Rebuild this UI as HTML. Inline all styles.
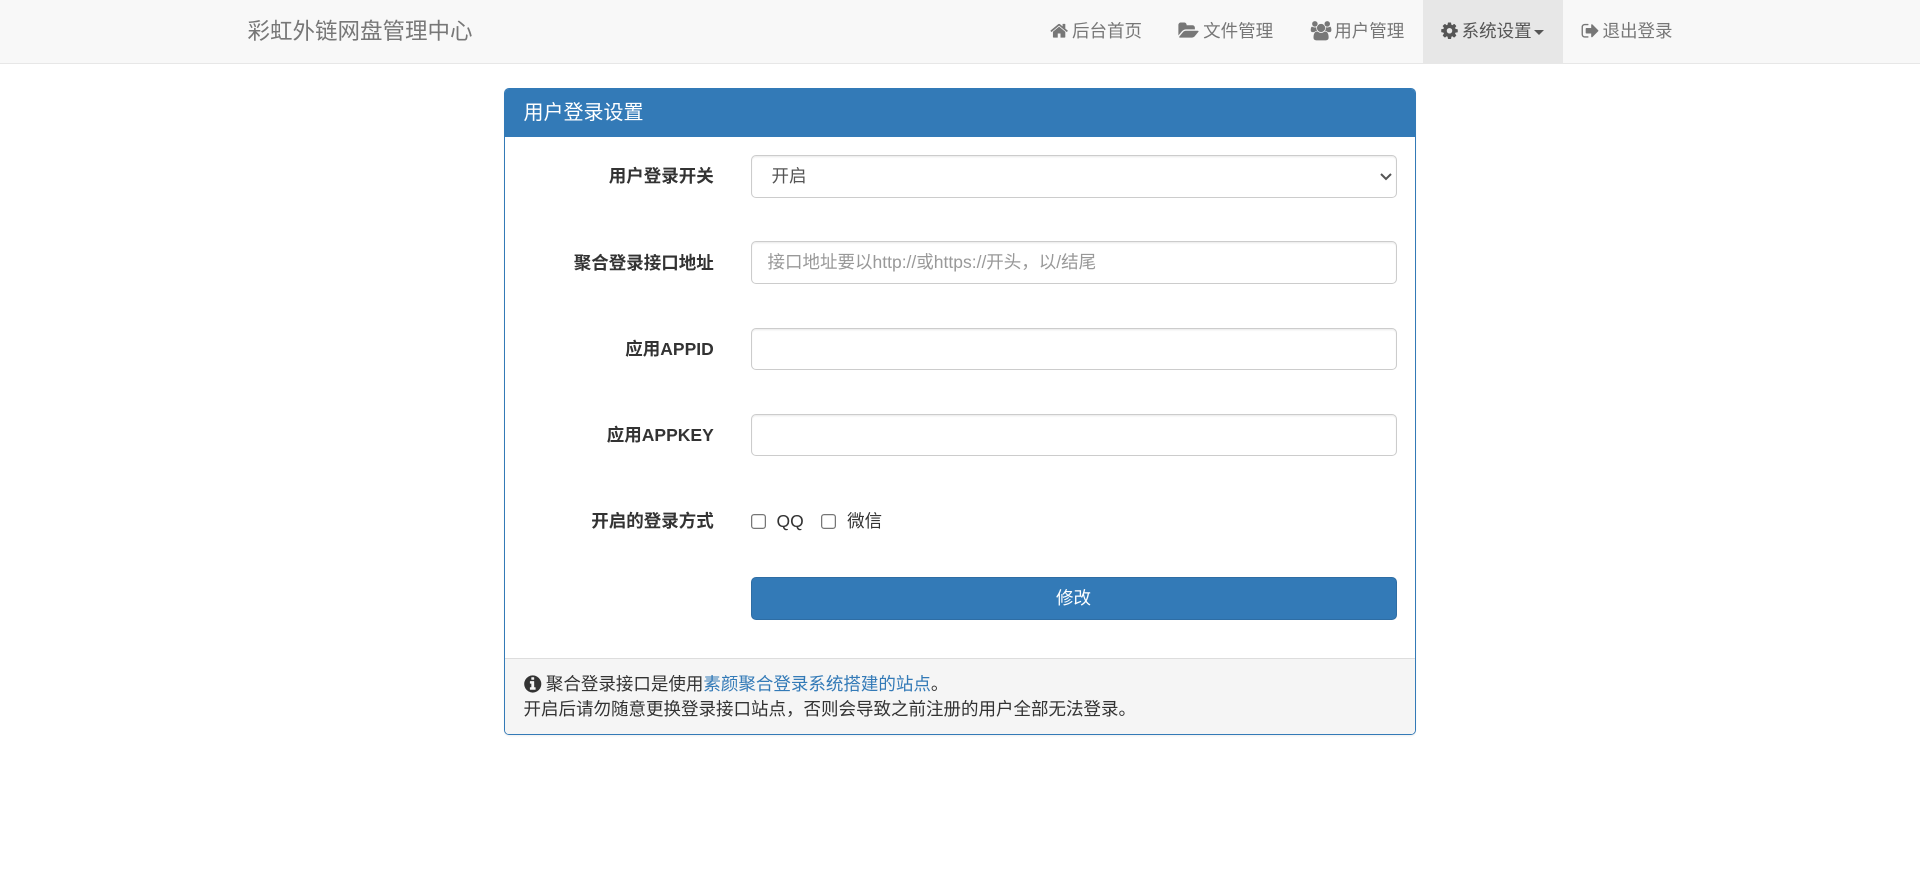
<!DOCTYPE html>
<html lang="zh-CN">
<head>
<meta charset="utf-8">
<title>用户登录设置</title>
<style>
*{box-sizing:border-box}
html{margin:0;padding:0;background:#fff}
body{margin:0;width:1536px;height:702.4px;overflow:hidden;zoom:1.25;background:#fff;color:#333;font:14px/1.42857143 "Liberation Sans","Noto Sans CJK SC",sans-serif}
a{text-decoration:none}
.navbar{height:51px;background:#f8f8f8;border-bottom:1px solid #e7e7e7;position:relative}
.brand{position:absolute;left:183px;top:0;height:50px;padding:15px;font-size:18px;line-height:20px;color:#777}
.nav{position:absolute;right:183.8px;top:0;display:flex;margin:0;padding:0;list-style:none}
.nav a{display:block;height:50px;padding:15px;line-height:20px;color:#777;white-space:nowrap}
.nav li:last-child a{padding:15px 14.2px 15px 15.8px}
.nav a.on{background:#e7e7e7;color:#555}
svg{fill:currentColor;display:inline-block;vertical-align:-2px;overflow:visible}
.nav svg{transform:scale(1.1);transform-origin:center}
.caret{display:inline-block;width:0;height:0;margin-left:2px;vertical-align:middle;border-top:4px solid;border-right:4px solid transparent;border-left:4px solid transparent}
.panel{position:absolute;left:403px;top:70.2px;width:730px;background:#fff;border:1px solid #337ab7;border-radius:4px;box-shadow:0 1px 1px rgba(0,0,0,.05)}
.heading{background:#337ab7;color:#fff;padding:10.8px 15px 9.2px;border-bottom:1px solid #337ab7;border-radius:3px 3px 0 0}
.heading h3{margin:0;font-size:16px;line-height:1.1;font-weight:400;color:#fff}
.pbody{padding:14.6px 15px 15.4px}
.group{display:flex;margin:0 -15px 35px}
.group label.l{width:182px;padding:7.4px 14.4px 0 15px;text-align:right;font-weight:700;margin:0}
.col{width:546.8px;padding:0 15px;flex:none}
.fc{display:block;width:100%;height:34px;padding:6px 12.8px;font:14px/1.42857143 "Liberation Sans","Noto Sans CJK SC",sans-serif;color:#555;background:#fff;border:1px solid #ccc;border-radius:4px;box-shadow:inset 0 1px 1px rgba(0,0,0,.075);outline:0}
select.fc{padding:6px 12px}
.fc::placeholder{color:#999;opacity:1}
.ci{position:relative;display:inline-block;padding-left:20.8px;margin:0;font-weight:400;vertical-align:middle}
.ci+.ci{margin-left:10px}
.ci input{position:absolute;margin:4px 0 0 -20px;left:20px;top:0}
.btn{display:block;width:100%;height:34px;padding:6px 12px;color:#fff;background:#337ab7;border:1px solid #2e6da4;border-radius:4px;font:14px/1.42857143 "Liberation Sans","Noto Sans CJK SC",sans-serif;text-align:center}
.footer{padding:10.8px 15px 9.2px;background:#f5f5f5;border-top:1px solid #ddd;border-radius:0 0 3px 3px}
.footer a{color:#337ab7}
</style>
</head>
<body>
<div class="navbar">
  <a class="brand" href="#">彩虹外链网盘管理中心</a>
  <ul class="nav">
    <li><a href="#"><svg width="13" height="14" viewBox="64 0 1664 1792"><path d="M1472 992v480q0 26-19 45t-45 19h-384v-384h-256v384h-384q-26 0-45-19t-19-45v-480q0-1 .5-3t.5-3l575-474 575 474q1 2 1 6zm223-69l-62 74q-8 9-21 11h-3q-13 0-21-7l-692-577-692 577q-12 8-24 7-13-2-21-11l-62-74q-8-10-7-23.5t11-21.5l719-599q32-26 76-26t76 26l244 204v-195q0-14 9-23t23-9h192q14 0 23 9t9 23v408l219 182q10 8 11 21.5t-7 23.5z"/></svg> 后台首页</a></li>
    <li><a href="#"><svg width="15" height="14" viewBox="0 0 1920 1792"><path d="M1815 952q0 31-31 66l-336 396q-43 51-120.5 86.5t-143.5 35.5h-1088q-34 0-60.5-13t-26.5-43q0-31 31-66l336-396q43-51 120.5-86.5t143.5-35.5h1088q34 0 60.5 13t26.5 43zm-343-344v160h-832q-94 0-197 47.5t-164 119.5l-337 396-5 6q0-4-.5-12.5t-.5-12.5v-960q0-92 66-158t158-66h320q92 0 158 66t66 158v32h544q92 0 158 66t66 158z"/></svg> 文件管理</a></li>
    <li><a href="#"><svg width="15" height="14" viewBox="0 0 1920 1792"><path d="M657 896q-162 5-265 128h-134q-82 0-138-40.5t-56-118.5q0-353 124-353 6 0 43.5 21t97.5 42.5 119 21.5q67 0 133-23-5 37-5 66 0 139 81 256zm1071 637q0 120-73 189.5t-194 69.5h-874q-121 0-194-69.5t-73-189.5q0-53 3.5-103.5t14-109 26.5-108.5 43-97.5 62-81 85.5-53.5 111.5-20q10 0 43 21.5t73 48 107 48 135 21.5 135-21.5 107-48 73-48 43-21.5q61 0 111.5 20t85.5 53.5 62 81 43 97.5 26.5 108.5 14 109 3.5 103.5zm-1024-1277q0 106-75 181t-181 75-181-75-75-181 75-181 181-75 181 75 75 181zm704 384q0 159-112.5 271.5t-271.5 112.5-271.5-112.5-112.5-271.5 112.5-271.5 271.5-112.5 271.5 112.5 112.5 271.5zm576 225q0 78-56 118.5t-138 40.5h-134q-103-123-265-128 81-117 81-256 0-29-5-66 66 23 133 23 59 0 119-21.5t97.5-42.5 43.5-21q124 0 124 353zm-128-609q0 106-75 181t-181 75-181-75-75-181 75-181 181-75 181 75 75 181z"/></svg> 用户管理</a></li>
    <li><a class="on" href="#"><svg width="12" height="14" viewBox="128 0 1536 1792"><path d="M1152 896q0-106-75-181t-181-75-181 75-75 181 75 181 181 75 181-75 75-181zm512-109v222q0 12-8 23t-20 13l-185 28q-19 54-39 91 35 50 107 138 10 12 10 25t-9 23q-27 37-99 108t-94 71q-12 0-26-9l-138-108q-44 23-91 38-16 136-29 186-7 28-36 28h-222q-14 0-24.5-8.5t-11.5-21.5l-28-184q-49-16-90-37l-141 107q-10 9-25 9-14 0-25-11-126-114-165-168-7-10-7-23 0-12 8-23 15-21 51-66.5t54-70.5q-27-50-41-99l-183-27q-13-2-21-12.5t-8-23.5v-222q0-12 8-23t19-13l186-28q14-46 39-92-40-57-107-138-10-12-10-24 0-10 9-23 26-36 98.5-107.5t94.5-71.5q13 0 26 10l138 107q44-23 91-38 16-136 29-186 7-28 36-28h222q14 0 24.5 8.5t11.5 21.5l28 184q49 16 90 37l142-107q9-9 24-9 13 0 25 10 129 119 165 170 7 8 7 22 0 12-8 23-15 21-51 66.5t-54 70.5q26 50 41 98l183 28q13 2 21 12.5t8 23.5z"/></svg> 系统设置<span class="caret"></span></a></li>
    <li><a href="#"><svg width="12" height="14" viewBox="128 0 1536 1792"><path d="M704 1440q0 4 1 20t.5 26.5-3 23.5-10 19.5-20.5 6.5h-320q-119 0-203.5-84.5t-84.5-203.5v-704q0-119 84.5-203.5t203.5-84.5h320q13 0 22.5 9.5t9.5 22.5q0 4 1 20t.5 26.5-3 23.5-10 19.5-20.5 6.5h-320q-66 0-113 47t-47 113v704q0 66 47 113t113 47h312l11.5 1 11.5 3 8 5.5 7 9 2 13.5zm928-544q0 26-19 45l-544 544q-19 19-45 19t-45-19-19-45v-288h-448q-26 0-45-19t-19-45v-384q0-26 19-45t45-19h448v-288q0-26 19-45t45-19 45 19l544 544q19 19 19 45z"/></svg> 退出登录</a></li>
  </ul>
</div>
<div class="panel">
  <div class="heading"><h3>用户登录设置</h3></div>
  <div class="pbody">
    <div class="group"><label class="l">用户登录开关</label><div class="col"><select class="fc"><option>开启</option><option>关闭</option></select></div></div>
    <div class="group"><label class="l">聚合登录接口地址</label><div class="col"><input class="fc" type="text" placeholder="接口地址要以http://或https://开头，以/结尾"></div></div>
    <div class="group"><label class="l">应用APPID</label><div class="col"><input class="fc" type="text"></div></div>
    <div class="group"><label class="l">应用APPKEY</label><div class="col"><input class="fc" type="text"></div></div>
    <div class="group" style="height:26.8px"><label class="l">开启的登录方式</label><div class="col" style="padding-top:6.6px"><label class="ci"><input type="checkbox"> QQ</label> <label class="ci"><input type="checkbox"> 微信</label></div></div>
    <div class="group" style="margin-bottom:15px"><div style="width:182px"></div><div class="col"><button class="btn" type="button">修改</button></div></div>
  </div>
  <div class="footer"><svg width="14" height="16" viewBox="128 0 1536 1792" style="vertical-align:-3px"><path d="M1152 1376v-160q0-14-9-23t-23-9h-96v-512q0-14-9-23t-23-9h-320q-14 0-23 9t-9 23v160q0 14 9 23t23 9h96v320h-96q-14 0-23 9t-9 23v160q0 14 9 23t23 9h448q14 0 23-9t9-23zm-128-896v-160q0-14-9-23t-23-9h-192q-14 0-23 9t-9 23v160q0 14 9 23t23 9h192q14 0 23-9t9-23zm640 416q0 209-103 385.5t-279.5 279.5-385.5 103-385.5-103-279.5-279.5-103-385.5 103-385.5 279.5-279.5 385.5-103 385.5 103 279.5 279.5 103 385.5z"/></svg> 聚合登录接口是使用<a href="#">素颜聚合登录系统搭建的站点</a>。<br>开启后请勿随意更换登录接口站点，否则会导致之前注册的用户全部无法登录。</div>
</div>
</body>
</html>
